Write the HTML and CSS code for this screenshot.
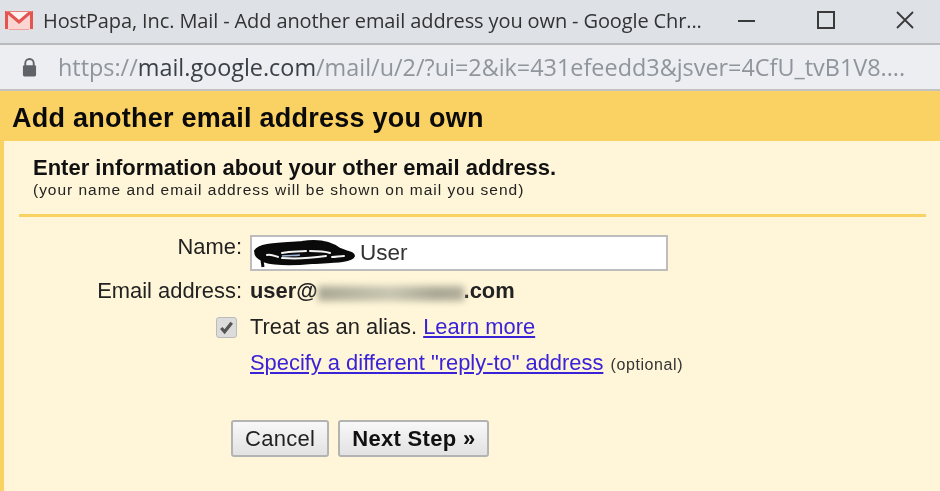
FILE: index.html
```html
<!DOCTYPE html>
<html lang="en">
<head>
<meta charset="utf-8">
<title>Add another email address you own</title>
<link rel="stylesheet" href="styles.css">
</head>
<body>
<header class="titlebar">
  <svg class="favicon" width="28" height="19" viewBox="0 0 28 19"><rect x="0" y="0" width="28" height="19" fill="#fbd5d2"/><path d="M3.5 1L14 9.5 24.5 1z" fill="#fff3f2"/><path d="M1.5 18V1.5h1.5L14 11 25 1.5h1.5V18" fill="none" stroke="#e4554f" stroke-width="3"/><path d="M1 .5h26" stroke="#ea7d78" stroke-width="1"/><path d="M4 18.5h20" stroke="#f0a09c" stroke-width="1"/></svg>
  <span class="wintitle">HostPapa, Inc. Mail - Add another email address you own - Google Chr...</span>
  <div class="winbtns">
    <svg width="20" height="20" viewBox="0 0 20 20"><path d="M1 11h17" stroke="#3a3a3a" stroke-width="2"/></svg>
    <svg width="20" height="20" viewBox="0 0 20 20"><rect x="2" y="2" width="16" height="16" fill="none" stroke="#3a3a3a" stroke-width="2"/></svg>
    <svg width="20" height="20" viewBox="0 0 20 20"><path d="M2 2l16 16M18 2L2 18" stroke="#3a3a3a" stroke-width="1.8"/></svg>
  </div>
</header>
<div class="urlbar">
  <svg width="15" height="20" viewBox="0 0 16 20"><path d="M3.5 9V6a4.5 4.5 0 0 1 9 0v3" fill="none" stroke="#5f6368" stroke-width="2"/><rect x="1" y="8" width="14" height="12" rx="1.5" fill="#5f6368"/></svg>
  <span class="url">https://<b class="host">mail.google.com</b>/mail/u/2/?ui=2&amp;ik=431efeedd3&amp;jsver=4CfU_tvB1V8....</span>
</div>
<main class="dialog">
  <h1 class="heading">Add another email address you own</h1>
  <section class="panel">
    <div class="intro">
      <h2 class="intro-title">Enter information about your other email address.</h2>
      <p class="intro-sub">(your name and email address will be shown on mail you send)</p>
    </div>
    <form class="form">
      <label class="lbl lbl-name">Name:</label>
      <div class="field"><span class="scribble-wrap"><svg class="scribble" width="106" height="30" viewBox="0 0 106 30"><path d="M3 13C8 5 30 6 50 4 68 1 80 5 88 11c6 3 14 3 14 7-2 6-22 6-42 7-20 2-44 2-50-3C5 20 3 16 3 13z" fill="#0a0a0a" stroke="#0a0a0a" stroke-width="2"/><path d="M15 17c4-1 8 1 11 2M30 15c10-2 16-1 24-2M58 13c8 0 14 0 20 2M30 20c12 1 30 0 44-2M80 19c4 0 8-1 12-1" stroke="#f4f4f4" stroke-width="2" stroke-linecap="round" fill="none"/><path d="M30 18c8-1 12 0 18-1" stroke="#9fb4d8" stroke-width="1.5" fill="none"/><path d="M10 22l1 7" stroke="#0a0a0a" stroke-width="3"/></svg></span>User</div>
      <label class="lbl">Email address:</label>
      <div class="email">user@<span class="blur"></span>.com</div>
      <div class="check-cell"><span class="check"><svg width="19" height="19" viewBox="0 0 20 20"><path d="M4.5 10.5l3.5 4 7.5-9.5" fill="none" stroke="#555" stroke-width="3.4"/></svg></span></div>
      <div class="val">Treat as an alias. <a href="#">Learn more</a></div>
      <div class="val val-span"><a href="#">Specify a different "reply-to" address</a> <small class="opt">(optional)</small></div>
    </form>
    <div class="actions">
      <button type="button" class="btn">Cancel</button>
      <button type="button" class="btn btn-primary">Next Step »</button>
    </div>
  </section>
</main>
</body>
</html>
```
FILE: styles.css
```css
* { box-sizing: border-box; }
html, body { margin: 0; height: 100%; overflow: hidden; }
body { width: 940px; height: 491px; display: flex; flex-direction: column; font-family: "Liberation Sans", Arial, sans-serif; background: #fff6d9; color: #111; filter: blur(0.35px); }
.titlebar { height: 45px; flex: none; display: flex; align-items: center; background: #dee1e6; border-bottom: 2px solid #b9babc; padding: 0 0 3px 5px; }
.favicon { flex: none; margin-right: 10px; }
.wintitle { font: 20px "Open Sans", sans-serif; color: #333; white-space: nowrap; flex: 1; letter-spacing: -0.12px; }
.winbtns { display: flex; gap: 59px; padding-right: 25px; align-items: center; }
.urlbar { height: 46px; flex: none; display: flex; align-items: center; background: #eceef1; border-bottom: 2px solid #c3c3c3; padding-left: 22px; gap: 21px; }
.url { font: 23.4px "Open Sans", sans-serif; color: #8f959c; white-space: nowrap; }
.host { font-weight: 400; color: #3b4048; }
.dialog { flex: 1; display: flex; flex-direction: column; background: #fad163; padding-left: 4px; }
.heading { margin: 0; height: 50px; display: flex; align-items: center; padding: 4px 0 0 8px; font-size: 27px; font-weight: 700; color: #0a0a0a; letter-spacing: 0.25px; }
.panel { flex: 1; background: #fff6d9; padding: 15px 14px 0 15px; }
.intro { padding: 0 0 16px 14px; border-bottom: 3px solid #fad163; }
.intro-title { margin: 0 0 2px; font-size: 22px; line-height: 24px; font-weight: 700; color: #111; }
.intro-sub { margin: 0; font-size: 15.5px; line-height: 16px; letter-spacing: 0.98px; color: #222; }
.form { display: grid; grid-template-columns: 223px 1fr; column-gap: 8px; margin-top: 18px; align-items: center; font-size: 21.9px; }
.lbl { text-align: right; color: #222; height: 36px; line-height: 36px; }
.lbl-name { line-height: 22px; }
.field { width: 418px; height: 36px; margin-bottom: 2px; background: #fff; border: 2px solid #bdbdbd; font-size: 22.5px; line-height: 32px; color: #333; display: flex; align-items: center; padding-left: 108px; position: relative; }
.scribble-wrap { position: absolute; left: 0; top: 1px; display: block; }
.scribble { display: block; }
.email { height: 36px; font-weight: 700; color: #222; display: flex; align-items: center; }
.blur { width: 146px; height: 15px; background: linear-gradient(90deg, #a9a692, #b9b6a2 25%, #c8c5b0 50%, #aaa895 80%, #b0ad9a); filter: blur(3.5px); display: block; margin: 4px 0 0; }
.check-cell { height: 36px; display: flex; justify-content: flex-end; align-items: center; padding-right: 5px; }
.check { width: 21px; height: 21px; display: block; background: #dcdcdc; border: 1px solid #bbb; border-radius: 3px; }
.check svg { display: block; }
.val { height: 36px; line-height: 36px; color: #222; white-space: nowrap; }
.val-span { grid-column: 2; }
.val a { color: #3a22d6; text-decoration: underline; }
.opt { font-size: 16px; letter-spacing: 0.6px; color: #333; margin-left: 1px; }
.actions { display: flex; gap: 9px; margin: 39px 0 0 212px; }
.btn { height: 37px; padding: 0 12px; font: 22px/33px "Liberation Sans", Arial, sans-serif; color: #222; background: linear-gradient(#f8f8f8, #e2e2e2); border: 2px solid #b3b3b3; border-radius: 3px; letter-spacing: 0.3px; }
.btn-primary { font-weight: 700; color: #111; padding: 0 12px; }
```
